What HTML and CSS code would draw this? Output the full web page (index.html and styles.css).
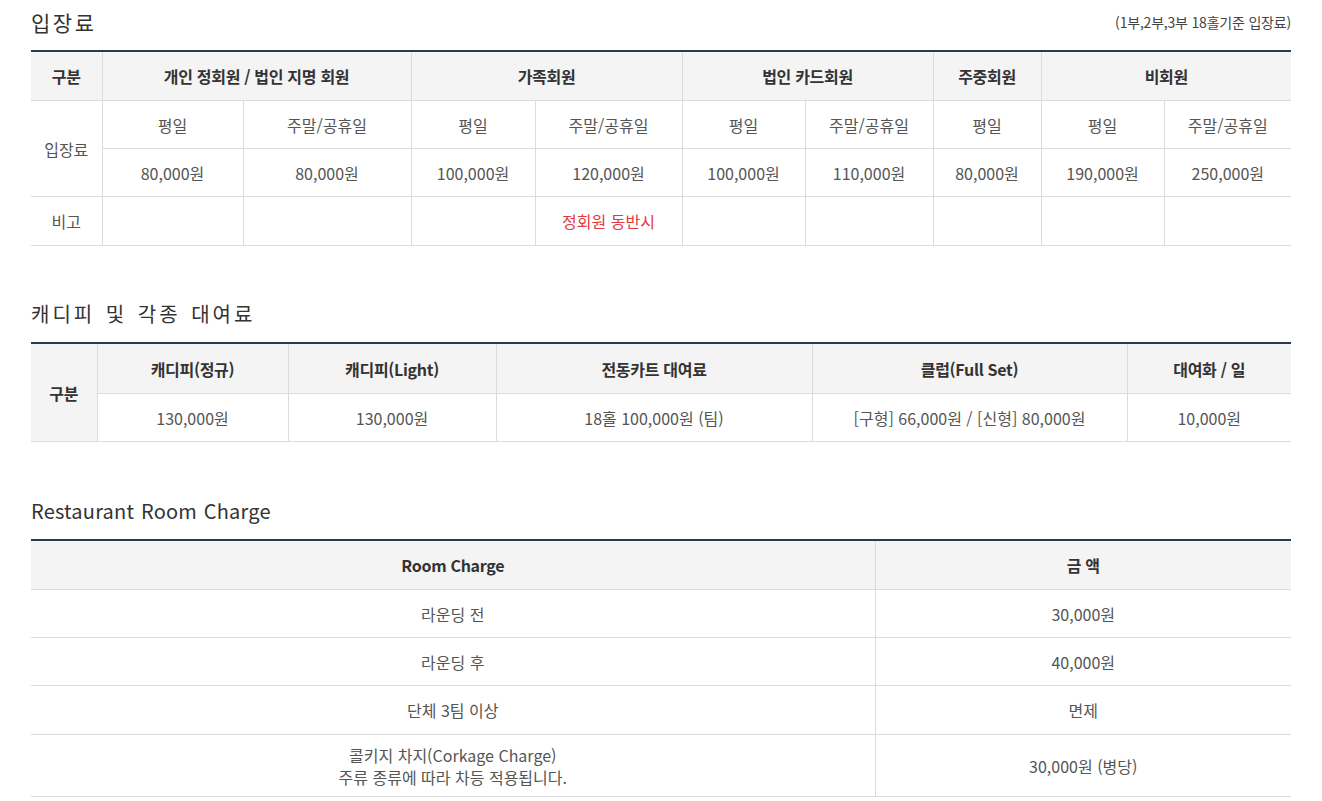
FILE: index.html
```html
<!DOCTYPE html>
<html lang="ko">
<head>
<meta charset="utf-8">
<link rel="stylesheet" href="styles.css">
</head>
<body>
<div class="page">
  <section class="sec sec-fee">
    <div class="sec-head">
      <h2 class="title t1">입장료</h2>
      <span class="note">(1부,2부,3부 18홀기준 입장료)</span>
    </div>
    <table class="tbl">
      <colgroup>
        <col style="width:71px"><col style="width:141px"><col style="width:168px"><col style="width:124px"><col style="width:147px"><col style="width:123px"><col style="width:128px"><col style="width:108px"><col style="width:123px"><col style="width:127px">
      </colgroup>
      <thead>
        <tr>
          <th>구분</th>
          <th colspan="2">개인 정회원 / 법인 지명 회원</th>
          <th colspan="2">가족회원</th>
          <th colspan="2">법인 카드회원</th>
          <th>주중회원</th>
          <th colspan="2">비회원</th>
        </tr>
      </thead>
      <tbody>
        <tr>
          <td rowspan="2">입장료</td>
          <td>평일</td><td>주말/공휴일</td>
          <td>평일</td><td>주말/공휴일</td>
          <td>평일</td><td>주말/공휴일</td>
          <td>평일</td>
          <td>평일</td><td>주말/공휴일</td>
        </tr>
        <tr>
          <td>80,000원</td><td>80,000원</td>
          <td>100,000원</td><td>120,000원</td>
          <td>100,000원</td><td>110,000원</td>
          <td>80,000원</td>
          <td>190,000원</td><td>250,000원</td>
        </tr>
        <tr class="last">
          <td>비고</td>
          <td></td><td></td>
          <td></td><td class="red">정회원 동반시</td>
          <td></td><td></td>
          <td></td>
          <td></td><td></td>
        </tr>
      </tbody>
    </table>
  </section>

  <section class="sec sec-rent">
    <div class="sec-head">
      <h2 class="title t2">캐디피 및 각종 대여료</h2>
    </div>
    <table class="tbl">
      <colgroup>
        <col style="width:66px"><col style="width:191px"><col style="width:208px"><col style="width:316px"><col style="width:315px"><col style="width:164px">
      </colgroup>
      <tbody>
        <tr class="hrow">
          <th rowspan="2">구분</th>
          <th>캐디피(정규)</th>
          <th>캐디피(Light)</th>
          <th>전동카트 대여료</th>
          <th>클럽(Full Set)</th>
          <th>대여화 / 일</th>
        </tr>
        <tr>
          <td>130,000원</td>
          <td>130,000원</td>
          <td>18홀 100,000원 (팀)</td>
          <td>[구형] 66,000원 / [신형] 80,000원</td>
          <td>10,000원</td>
        </tr>
      </tbody>
    </table>
  </section>

  <section class="sec">
    <div class="sec-head">
      <h2 class="title t3">Restaurant Room Charge</h2>
    </div>
    <table class="tbl">
      <colgroup>
        <col style="width:844px"><col style="width:416px">
      </colgroup>
      <thead>
        <tr><th>Room Charge</th><th>금 액</th></tr>
      </thead>
      <tbody>
        <tr><td>라운딩 전</td><td>30,000원</td></tr>
        <tr><td>라운딩 후</td><td>40,000원</td></tr>
        <tr class="r3"><td>단체 3팀 이상</td><td>면제</td></tr>
        <tr class="tall"><td>콜키지 차지(Corkage Charge)<br>주류 종류에 따라 차등 적용됩니다.</td><td>30,000원 (병당)</td></tr>
      </tbody>
    </table>
  </section>
</div>
</body>
</html>
```

FILE: styles.css
```css
html, body {
  margin: 0;
  padding: 0;
  background: #fff;
}
body {
  font-family: "Noto Sans CJK KR", "Noto Sans", sans-serif;
  color: #555;
}
.page {
  width: 1260px;
  padding-left: 31px;
}
.sec {
  margin-bottom: 48px;
}
.sec-fee { margin-bottom: 46px; }
.sec-rent { margin-bottom: 47px; }
.sec-head {
  height: 44px;
  margin-bottom: 6px;
  display: flex;
  align-items: center;
  justify-content: space-between;
}
.title {
  margin: 0;
  font-size: 20px;
  font-weight: 400;
  color: #333;
  line-height: 1;
}
.t1 { font-size: 21px; letter-spacing: 2.5px; }
.t2 { letter-spacing: 3px; word-spacing: 2px; }
.t3 { letter-spacing: 0.2px; word-spacing: 1px; }
.note {
  font-size: 14px;
  color: #444;
  letter-spacing: -0.2px;
}
.tbl {
  width: 1260px;
  border-collapse: collapse;
  table-layout: fixed;
  border-top: 2px solid #2c3a4d;
}
.tbl th,
.tbl td {
  height: 47px;
  padding: 0;
  text-align: center;
  vertical-align: middle;
  border: 1px solid #dcdcdc;
  font-size: 16px;
  line-height: 20px;
}
.tbl tr > :first-child { border-left: none; }
.tbl tr > :last-child { border-right: none; }
.tbl th {
  background: #f4f4f4;
  color: #333;
  font-weight: 700;
  letter-spacing: -0.3px;
}
.tbl thead th { height: 48px; }
.tbl .hrow th { height: 49px; }
.tbl td {
  color: #555;
  font-weight: 400;
}
.tbl .last td { height: 48px; }
.tbl .r3 td { height: 48px; }
.tbl td[rowspan] { border-left: none; }
.red { color: #e4393c !important; }
.tall td { height: 61px; line-height: 22px; }
```
